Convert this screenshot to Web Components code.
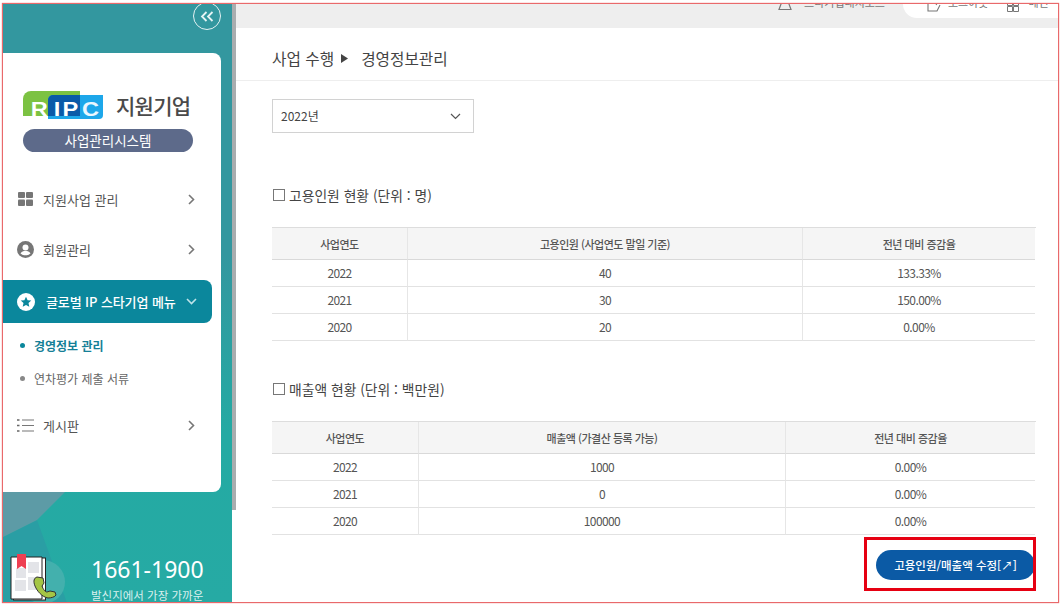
<!DOCTYPE html>
<html lang="ko"><head><meta charset="utf-8"><title>경영정보관리</title>
<style>
html,body{margin:0;padding:0;background:#fff;width:1061px;height:606px;overflow:hidden;font-family:"Noto Sans CJK KR","Noto Sans",sans-serif}
</style></head><body>
<app-shell>
  <side-bar slot="side"></side-bar>
  <top-bar slot="top"></top-bar>
  <page-head slot="main" section="사업 수행" title="경영정보관리"></page-head>
  <year-select slot="main" value="2022년"></year-select>
  <data-section slot="main" style="--gap-top:50px" heading="고용인원 현황 (단위 : 명)" cols="135px 395px 233px"
     labels="사업연도|고용인원 (사업연도 말일 기준)|전년 대비 증감율"
     rows="2022|40|133.33%;2021|30|150.00%;2020|20|0.00%"></data-section>
  <data-section slot="main" style="--gap-top:36px" heading="매출액 현황 (단위 : 백만원)" cols="146px 367px 250px"
     labels="사업연도|매출액 (가결산 등록 가능)|전년 대비 증감율"
     rows="2022|1000|0.00%;2021|0|0.00%;2020|100000|0.00%"></data-section>
  <action-bar slot="main" label="고용인원/매출액 수정[↗]"></action-bar>
</app-shell>
<script>
const mk=(name,html)=>customElements.define(name,class extends HTMLElement{
  connectedCallback(){ if(this.shadowRoot) return; const s=this.attachShadow({mode:'open'});
    s.innerHTML=typeof html==='function'?html(this):html; }
});
mk('app-shell',`<style>
:host{display:block;position:relative;width:1061px;height:606px;box-sizing:border-box;padding:4px 3px 3px 3px}
.in{display:flex;width:100%;height:100%;overflow:hidden;background:#fff}
.side{flex:0 0 229px;display:flex}
.bar{flex:0 0 4px;background:linear-gradient(#a9adaf 0 506px,#fff 506px)}
.content{flex:1;min-width:0;display:flex;flex-direction:column}
.main{padding:0 22px 0 36px;display:flex;flex-direction:column}
.frame{position:absolute;left:2px;top:3px;right:2px;bottom:3px;border:1px solid #e9696b;box-shadow:0 0 1px #e9696b;pointer-events:none}
</style><div class="in"><div class="side"><slot name="side"></slot></div><div class="bar"></div>
<div class="content"><slot name="top"></slot><div class="main"><slot name="main"></slot></div></div></div><div class="frame"></div>`);
mk('top-bar',`<style>
:host{display:block;height:24px;background:#eeeeee;flex:none;color:#777;font-size:11px}
.wrap{display:flex;justify-content:flex-end;align-items:flex-start;height:24px;overflow:hidden;line-height:14px}
.a{display:flex;align-items:flex-end;gap:12px;margin-right:18px;margin-top:-9px}
.pill{background:#fff;border-bottom-left-radius:14px;height:14px;width:155px;flex:none;box-sizing:border-box;padding:0 0 0 24px;display:flex;gap:19px;overflow:hidden;align-items:flex-start}
.p{display:flex;gap:6px;align-items:flex-end;margin-top:-9px;white-space:nowrap}
.m{gap:9px}
svg{display:block;flex:none}
</style><div class="wrap"><div class="a"><svg width="14" height="12" viewBox="0 0 14 12" style="margin-bottom:-2px"><path d="M1 10.500h12L9.500 1h-5z" fill="none" stroke="#777" stroke-width="1.200"/></svg><span>스타기업대시보드</span></div>
<div class="pill"><span class="p"><svg width="15" height="14" viewBox="0 0 15 14" style="margin-bottom:-4px"><path d="M1 3v9h9l3-6M13 0 9 6" fill="none" stroke="#777" stroke-width="1.100"/></svg><span>로그아웃</span></span>
<span class="p m"><svg width="12" height="12" viewBox="0 0 12 12" style="margin-bottom:-3px"><path d="M.5.500h5v5h-5zM6.500.500h5v5h-5zM.5 6.500h5v5h-5zM6.500 6.500h5v5h-5z" fill="none" stroke="#777"/></svg><span>메인</span></span></div></div>`);
mk('side-bar',`<style>
:host{display:flex;flex-direction:column;position:relative;width:229px;height:599px;overflow:hidden;background:linear-gradient(#33979f 0,#33979f 250px,#24aaa3 430px,#26aaa4 100%);color:#fff}
.deco{position:absolute;left:0;top:488px;width:229px;height:111px}
.tg{align-self:flex-end;margin:-2px 11px 0 0;width:28px;height:28px;box-sizing:border-box;border:1.500px solid #e4f2f3;border-radius:50%;display:flex;align-items:center;justify-content:center;flex:none;position:relative}
.card{position:relative;margin-top:23px;width:218px;height:439px;background:#fff;border-radius:0 8px 8px 0;flex:none;color:#555;box-sizing:border-box;padding-top:38px}
.logo{display:flex;align-items:center;margin-left:20px;gap:12px;height:29px}
.logo b{font:500 21px/29px "Noto Sans CJK KR",sans-serif;color:#4a4a4a;letter-spacing:-.7px;white-space:nowrap}
.pill{margin:9px 0 0 20px;width:170px;height:23px;border-radius:12px;background:#5d6a8a;color:#fff;font:400 13.500px/23px "Noto Sans CJK KR",sans-serif;text-align:center}
.nav{margin-top:22px;display:flex;flex-direction:column}
.foot{position:relative;flex:1;display:flex;padding:61px 0 0 7px}
.num{margin-left:29px;margin-top:2px;line-height:1}
.num b{display:block;font:400 23px/29px "Noto Sans","Noto Sans CJK KR",sans-serif;white-space:nowrap}
.num span{display:block;font:400 11.500px/16px "Noto Sans CJK KR",sans-serif;color:#d8f0ee;white-space:nowrap;margin-top:3px}
</style>
<svg class="deco" viewBox="0 0 229 111"><path d="M0 45 34 28 64 111H0z" fill="#2a9ea4"/><path d="M0 0H62L34 28 0 45z" fill="#5d9ba6"/><circle cx="40" cy="90" r="22" fill="#43b0ad"/></svg>
<div class="tg"><svg width="15" height="11" viewBox="0 0 15 11"><path d="M6.500 1 2 5.500 6.500 10M12.500 1 8 5.500l4.500 4.500" fill="none" stroke="#e6f3f4" stroke-width="1.800"/></svg></div>
<div class="card">
 <div class="logo"><ripc-logo></ripc-logo><b>지원기업</b></div>
 <div class="pill">사업관리시스템</div>
 <div class="nav">
  <nav-item icon="grid" label="지원사업 관리"></nav-item>
  <nav-item icon="user" label="회원관리"></nav-item>
  <nav-item icon="star" label="글로벌 IP 스타기업 메뉴" active></nav-item>
  <sub-item label="경영정보 관리" current></sub-item>
  <sub-item label="연차평가 제출 서류"></sub-item>
  <nav-item icon="list" label="게시판" style="margin-top:5px"></nav-item>
 </div>
</div>
<div class="foot"><svg width="52" height="50" viewBox="0 0 52 50"><rect x="3.500" y="5" width="32" height="42" fill="#fff" stroke="#222" stroke-width="1"/><path d="M1 4h31v42H1z" fill="#fff" stroke="#222"/><rect x="6" y="15" width="10" height="10" fill="#e3e4e8"/><rect x="18" y="9" width="11" height="11" fill="#e3e4e8"/><rect x="5" y="27" width="11" height="11" fill="#e3e4e8"/><rect x="18" y="24" width="11" height="13" fill="#e3e4e8"/><path d="M7 1h9v15l-4.500-3L7 16z" fill="#ee3f52"/><path d="M27 24c-3 1-4 4-2 9s7 11 13 12c3 0 7-1 8-3l-1-3-5-1-3 1c-2 0-4-3-5-6l2-3-1-5z" fill="#a4c545" stroke="#333" stroke-width="1"/></svg>
<div class="num"><b>1661-1900</b><span>발신지에서 가장 가까운</span></div></div>`);
mk('ripc-logo',`<style>:host{display:block;line-height:0}text{font:700 20px "Liberation Sans",sans-serif;fill:#fff}</style>
<svg width="81" height="29" viewBox="0 0 81 29"><path d="M0 8a8 8 0 0 1 8-8H57V25H0z" fill="#7cc242"/><path d="M25 9a5 5 0 0 1 5-5H80V24a4 4 0 0 1-4 4H25z" fill="#1da7ea"/><path d="M25 9a5 5 0 0 1 5-5H57V25H25z" fill="#0a5aa8"/><g transform="scale(1.180 1)"><text x="6.500" y="25">R</text><text x="26" y="25">I</text><text x="33.500" y="25">P</text><text x="50" y="25" style="fill:#eaf7ff">C</text></g></svg>`);
const icons={
 grid:'<svg width="15" height="14" viewBox="0 0 15 14"><rect width="7" height="6" rx="1" fill="#767676"/><rect x="8" width="7" height="6" rx="1" fill="#767676"/><rect y="7.500" width="7" height="6.500" rx="1" fill="#767676"/><rect x="8" y="7.500" width="7" height="6.500" rx="1" fill="#767676"/></svg>',
 user:'<svg width="17" height="17" viewBox="0 0 17 17"><circle cx="8.500" cy="8.500" r="8.500" fill="#767676"/><circle cx="8.500" cy="6.500" r="3" fill="#fff"/><path d="M3.500 12.500c1-2 3-2.500 5-2.500s4 .5 5 2.500c-1.500 1.300-3 1.800-5 1.800s-3.500-.5-5-1.800z" fill="#fff"/></svg>',
 star:'<svg width="18" height="18" viewBox="0 0 18 18"><circle cx="9" cy="9" r="9" fill="#fff"/><path d="m9 3.700 1.600 3.500 3.700.4-2.800 2.500.8 3.700L9 12l-3.300 1.800.8-3.700-2.800-2.500 3.700-.4z" fill="#0b879c"/></svg>',
 list:'<svg width="17" height="13" viewBox="0 0 17 13"><path d="M5 1h12M5 6.500h12M5 12h12" stroke="#777" stroke-width="1.200"/><path d="M0 1h2.500M0 6.500h2.500M0 12h2.500" stroke="#666" stroke-width="1.400"/></svg>'};
mk('nav-item',h=>{const a=h.hasAttribute('active');return `<style>
:host{display:flex;align-items:center;box-sizing:border-box;height:${a?43:50}px;${a?'width:209px;background:#0b879c;color:#fff;border-radius:0 8px 8px 0;padding:0 0 0 14px;margin:6px 0 0 0;font-weight:500;':'width:218px;padding:0 0 0 14px;color:#555;'}font-size:13px;white-space:nowrap}
.i{width:${a?18:17}px;display:flex;justify-content:center;flex:none}
.t{margin-left:${a?11:9}px;${a?'letter-spacing:-.1px;':''}flex:1}
svg{display:block}
.c{flex:none;margin-right:${a?15:26}px}
</style><span class="i">${icons[h.getAttribute('icon')]}</span><span class="t">${h.getAttribute('label')}</span>
<span class="c">${a?'<svg width="11" height="7" viewBox="0 0 11 7"><path d="m1 1 4.500 4.500L10 1" fill="none" stroke="#bfe3e9" stroke-width="1.600"/></svg>':'<svg width="7" height="11" viewBox="0 0 7 11"><path d="m1 1 4.500 4.500L1 10" fill="none" stroke="#777" stroke-width="1.600"/></svg>'}</span>`});
mk('sub-item',h=>{const c=h.hasAttribute('current');return `<style>
:host{display:flex;align-items:center;height:33px;padding-left:17px;font-size:12px;color:${c?'#167f97':'#666'};font-weight:${c?700:400};${c?'margin-top:6px;':''}white-space:nowrap}
i{width:5px;height:5px;border-radius:50%;background:${c?'#0b879c':'#888'};margin-right:9px;flex:none}
</style><i></i><span>${h.getAttribute('label')}</span>`});
mk('page-head',h=>`<style>
:host{display:flex;align-items:center;box-sizing:content-box;height:44px;margin:0 -22px 0 -36px;padding:8px 0 0 36px;border-bottom:1px solid #eee;font-size:15.700px;color:#444;flex:none}
svg{margin:0 13px 0 7px}
</style><span>${h.getAttribute('section')}</span><svg width="7" height="9" viewBox="0 0 7 9"><path d="M0 0l7 4.500L0 9z" fill="#444"/></svg><span>${h.getAttribute('title')}</span>`);
mk('year-select',h=>`<style>
:host{display:flex;align-items:center;justify-content:space-between;box-sizing:border-box;width:202px;height:34px;margin-top:18px;padding:0 12px 2px 8px;border:1px solid #d2d2d2;font-size:12px;color:#444;flex:none}
svg{margin-top:2px}
</style><span>${h.getAttribute('value')}</span><svg width="11" height="7" viewBox="0 0 11 7"><path d="m1 1 4.500 4.500L10 1" fill="none" stroke="#555" stroke-width="1.200"/></svg>`);
mk('data-section',h=>{
 const cols=h.getAttribute('cols').split(' ');
 const th=h.getAttribute('labels').split('|');
 const rows=h.getAttribute('rows').split(';').map(r=>r.split('|'));
 return `<style>
:host{display:block;margin-top:var(--gap-top);color:#555;flex:none}
h3{margin:0;display:flex;align-items:center;gap:4px;height:24px;font:400 13.800px/24px "Noto Sans CJK KR",sans-serif;color:#444}
h3 i{width:10px;height:10px;border:1px solid #777;display:block;margin-left:1px;flex:none}
.t{display:grid;grid-template-columns:${cols.join(' ')};margin-top:20px;border-top:1px solid #ddd}
.c{display:flex;align-items:center;justify-content:center;box-sizing:border-box;height:27px;padding-bottom:2px;border-bottom:1px solid #e2e2e2;font-size:12px;letter-spacing:-.6px;color:#555;border-left:1px solid #e6e6e6}
.c.f{border-left:0}
.c.h{height:32px;padding-bottom:0;background:#f5f5f5;font-size:11px;letter-spacing:-.5px;font-weight:500;border-bottom:1px solid #d9d9d9;color:#555}
</style><h3><i></i><span>${h.getAttribute('heading')}</span></h3><div class="t">${
 th.map((x,i)=>`<div class="c h ${i?'':'f'}">${x}</div>`).join('')}${
 rows.map(r=>r.map((x,i)=>`<div class="c ${i?'':'f'}">${x}</div>`).join('')).join('')}</div>`});
mk('action-bar',h=>`<style>
:host{display:flex;justify-content:flex-end;margin-top:15px;flex:none}
.b{position:relative;width:159px;height:30px;border-radius:15px;background:#0b5aa5;color:#fff;display:flex;align-items:center;justify-content:center;font-size:11.500px;font-weight:500;white-space:nowrap;margin-right:1px}
.r{position:absolute;left:-12px;top:-13px;width:172px;height:54px;box-sizing:border-box;border:3px solid #e60012;pointer-events:none}
</style><div class="b">${h.getAttribute('label')}<div class="r"></div></div>`);
</script></body></html>
